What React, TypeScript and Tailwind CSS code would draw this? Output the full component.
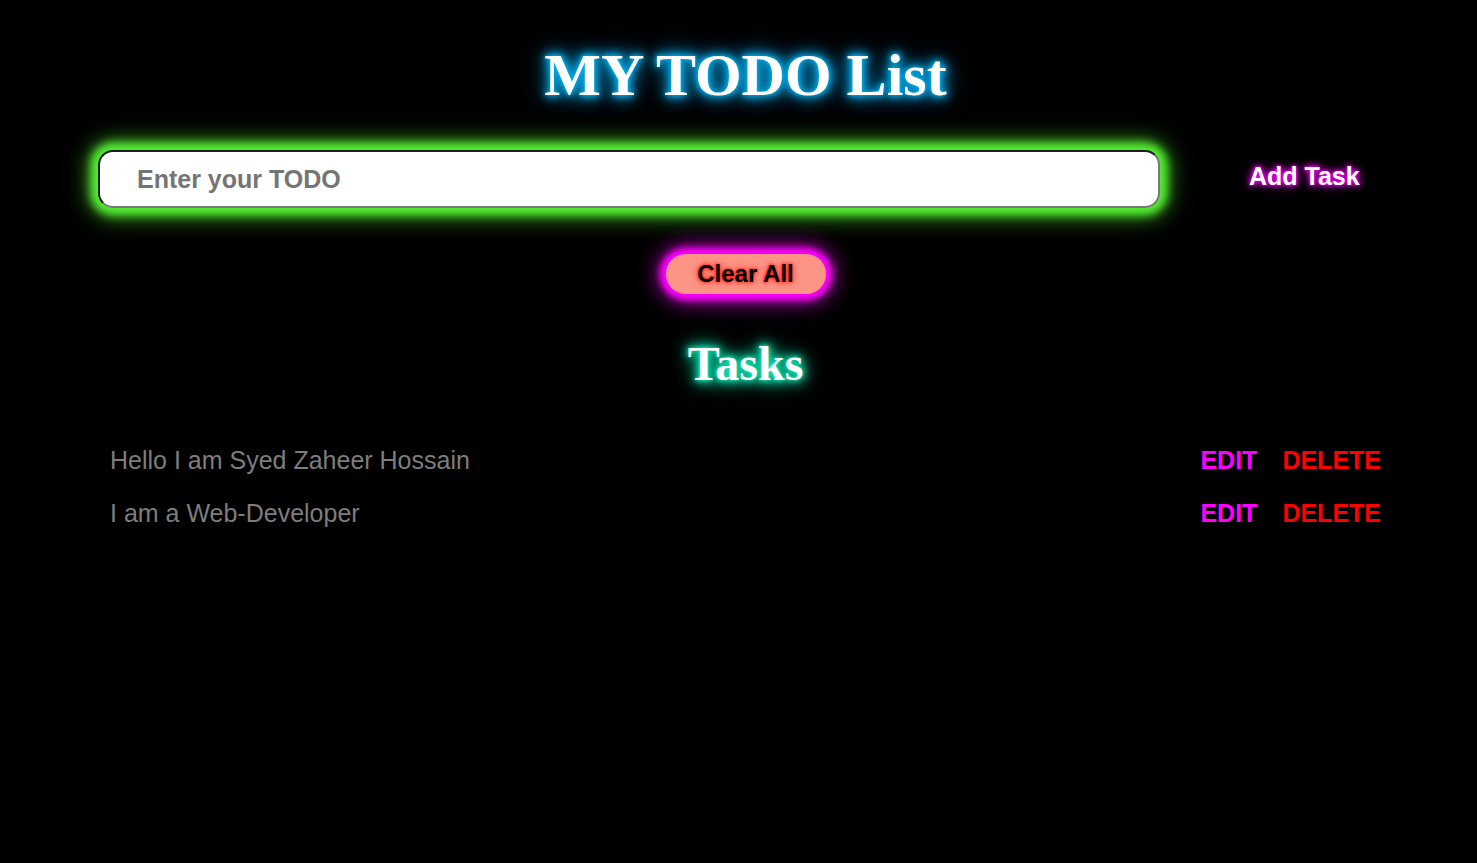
import React from "react";

const tasks = ["Hello I am Syed Zaheer Hossain", "I am a Web-Developer"];

export default function App() {
  return (
    <div className="min-h-screen w-full bg-black pl-[14px] font-['Liberation_Sans',Arial,sans-serif]">
      <h1 className="pt-[41px] text-center font-['Liberation_Serif','Times_New_Roman',serif] text-[60px] font-bold leading-[normal] text-white [text-shadow:0_0_4px_#00b4ee,0_0_8px_#00aae6,0_0_12px_#00a4e0,0_0_18px_#0098d4,0_0_26px_#0088c0]">
        MY TODO List
      </h1>

      <div className="mt-[40px] flex items-center pl-[84px]">
        <input
          type="text"
          placeholder="Enter your TODO"
          className="h-[58px] w-[1062px] rounded-[15px] border-2 border-t-[#1c1c1c] border-l-[#1c1c1c] border-b-[#787878] border-r-[#787878] bg-white pl-[37px] text-[25px] font-bold text-[#333] outline-none shadow-[0_0_8px_7px_#55ee33,0_0_22px_9px_#38a020] placeholder:font-bold placeholder:text-[#757575]"
        />
        <button className="ml-[89px] -mt-[5px] text-[25px] font-bold leading-[normal] text-white [text-shadow:0_0_3px_#ff00ff,0_0_6px_#ff00ff,0_0_10px_#e000e0]">
          Add Task
        </button>
      </div>

      <div className="mt-[46px] flex justify-center">
        <button className="flex h-[40px] w-[160px] items-center justify-center rounded-full bg-[#fd9486] text-[24px] font-bold text-black shadow-[0_0_6px_6px_#ff00ff,0_0_20px_9px_#a000a0] [text-shadow:0_0_3px_#ff0000,0_0_6px_#ff2000]">
          Clear All
        </button>
      </div>

      <h2 className="mt-[42px] text-center font-['Liberation_Serif','Times_New_Roman',serif] text-[48px] font-bold leading-[normal] text-white [text-shadow:0_0_4px_#1de9b6,0_0_8px_#10e0b0,0_0_12px_#00d8a8,0_0_18px_#00c898,0_0_24px_#00b088]">
        Tasks
      </h2>

      <ul className="mt-[55px] flex flex-col gap-[24px] px-[96px]">
        {tasks.map((t) => (
          <li key={t} className="flex items-center justify-between text-[25px] leading-[29px]">
            <span className="text-[#7d7d7d]">{t}</span>
            <div className="flex gap-[25px] font-bold">
              <button className="text-[#ff00ff]">EDIT</button>
              <button className="text-[#ff0000]">DELETE</button>
            </div>
          </li>
        ))}
      </ul>
    </div>
  );
}
